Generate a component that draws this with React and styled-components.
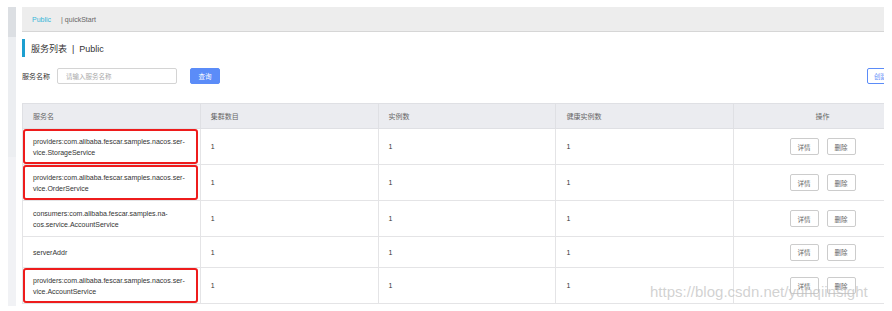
import styled, { createGlobalStyle } from "styled-components";

const GlobalStyle = createGlobalStyle`
	html, body {
		margin: 0;
		padding: 0;
		background: #fff;
		font-family: "Liberation Sans", "Noto Sans CJK SC", sans-serif;
	}
`;

const Page = styled.div`
	position: relative;
	display: flex;
	gap: 6px;
	width: 892px;
	height: 311px;
	padding: 7px 8px 0 8px;
	box-sizing: border-box;
	overflow: hidden;
`;

const SideStrip = styled.div`
	flex: 0 0 8px;
	height: 299px;
	background: linear-gradient(
		#dcdfe3 0px,
		#dcdfe3 30px,
		#eceef1 30px,
		#eceef1 150px,
		#f1f2f5 150px
	);
`;

const Main = styled.div`
	flex: 0 0 862px;
	overflow: hidden;
`;

const Inner = styled.div`
	width: 890px;
`;

const TopBar = styled.div`
	display: flex;
	align-items: center;
	height: 24px;
	padding-left: 10px;
	background: #ededed;
	border-bottom: 1px solid #d6d6d6;
	font-size: 7px;
	color: #666;
`;

const Crumb = styled.span`
	color: ${(p) => (p.active ? "#35b6d9" : "#666")};
	margin-right: ${(p) => (p.active ? "10px" : "0")};
`;

const Title = styled.h2`
	margin: 7px 0 0 0;
	height: 18px;
	display: flex;
	align-items: center;
	border-left: 3px solid #1c9fd0;
	padding-left: 6px;
	font-size: 9px;
	font-weight: normal;
	color: #333;
`;

const SearchRow = styled.div`
	display: flex;
	align-items: center;
	margin-top: 11px;
	height: 16px;
`;

const Label = styled.span`
	font-size: 7px;
	color: #333;
	margin-right: 7px;
`;

const Input = styled.input`
	width: 120px;
	height: 16px;
	box-sizing: border-box;
	border: 1px solid #d4d4d4;
	border-radius: 2px;
	padding: 0 8px;
	font-size: 6.5px;
	font-family: inherit;
	outline: none;
	&::placeholder {
		color: #aaa;
	}
`;

const Button = styled.button`
	height: ${(p) => (p.small ? "17px" : "16px")};
	padding: 0 ${(p) => (p.small ? "7px" : "9px")};
	box-sizing: border-box;
	border-radius: 2px;
	font-family: inherit;
	font-size: 6.5px;
	white-space: nowrap;
	cursor: pointer;
	border: 1px solid ${(p) => (p.primary || p.outline ? "#5b8cf8" : "#ccc")};
	background: ${(p) => (p.primary ? "#5b8cf8" : "#fff")};
	color: ${(p) => (p.primary ? "#fff" : p.outline ? "#5b8cf8" : "#666")};
`;

const QueryButton = styled(Button)`
	margin-left: 13px;
	width: 30px;
	padding: 0;
`;

const CreateButton = styled(Button)`
	margin-left: auto;
	width: 45px;
	text-align: left;
	padding: 0 0 0 6px;
`;

const Table = styled.table`
	margin-top: 19px;
	width: 890px;
	table-layout: fixed;
	border-collapse: collapse;
	font-size: 7px;
`;

const Th = styled.th`
	height: 25px;
	padding: 0 10px;
	box-sizing: border-box;
	background: #ebecf0;
	border: 1px solid #dfe0e4;
	font-weight: normal;
	color: #666;
	text-align: ${(p) => (p.center ? "center" : "left")};
`;

const Td = styled.td`
	position: relative;
	padding: 6.5px 10px;
	border: 1px solid #e4e4e6;
	color: #333;
	line-height: 11px;
	text-align: ${(p) => (p.center ? "center" : "left")};
	vertical-align: middle;

	${(p) =>
		p.marked &&
		`
		&::after {
			content: "";
			position: absolute;
			top: 0;
			left: 0;
			right: 2px;
			bottom: 0;
			border: 2px solid #ee1c1c;
			border-radius: 3px;
		}
	`}
`;

const Actions = styled.div`
	display: flex;
	justify-content: center;
	gap: 8px;
`;

const Watermark = styled.div`
	position: absolute;
	left: 650px;
	top: 283px;
	font-size: 15px;
	color: rgba(190, 190, 190, 0.7);
	pointer-events: none;
`;

const services = [
	{ lines: ["providers:com.alibaba.fescar.samples.nacos.ser-", "vice.StorageService"], marked: true },
	{ lines: ["providers:com.alibaba.fescar.samples.nacos.ser-", "vice.OrderService"], marked: true },
	{ lines: ["consumers:com.alibaba.fescar.samples.na-", "cos.service.AccountService"], marked: false },
	{ lines: ["serverAddr"], marked: false },
	{ lines: ["providers:com.alibaba.fescar.samples.nacos.ser-", "vice.AccountService"], marked: true },
];

export default function App() {
	return (
		<>
			<GlobalStyle />
			<Page>
				<SideStrip />
				<Main>
					<Inner>
						<TopBar>
							<Crumb active>Public</Crumb>
							<Crumb>| quickStart</Crumb>
						</TopBar>
						<Title>服务列表&nbsp;&nbsp;|&nbsp;&nbsp;Public</Title>
						<SearchRow>
							<Label>服务名称</Label>
							<Input placeholder="请输入服务名称" />
							<QueryButton primary>查询</QueryButton>
							<CreateButton outline>创建服务</CreateButton>
						</SearchRow>
						<Table>
							<thead>
								<tr>
									<Th>服务名</Th>
									<Th>集群数目</Th>
									<Th>实例数</Th>
									<Th>健康实例数</Th>
									<Th center>操作</Th>
								</tr>
							</thead>
							<tbody>
								{services.map((s, i) => (
									<tr key={i}>
										<Td marked={s.marked}>
											{s.lines.map((l, j) => (
												<div key={j}>{l}</div>
											))}
										</Td>
										<Td>1</Td>
										<Td>1</Td>
										<Td>1</Td>
										<Td center>
											<Actions>
												<Button small>详情</Button>
												<Button small>删除</Button>
											</Actions>
										</Td>
									</tr>
								))}
							</tbody>
						</Table>
					</Inner>
				</Main>
				<Watermark>https://blog.csdn.net/yunqiinsight</Watermark>
			</Page>
		</>
	);
}
